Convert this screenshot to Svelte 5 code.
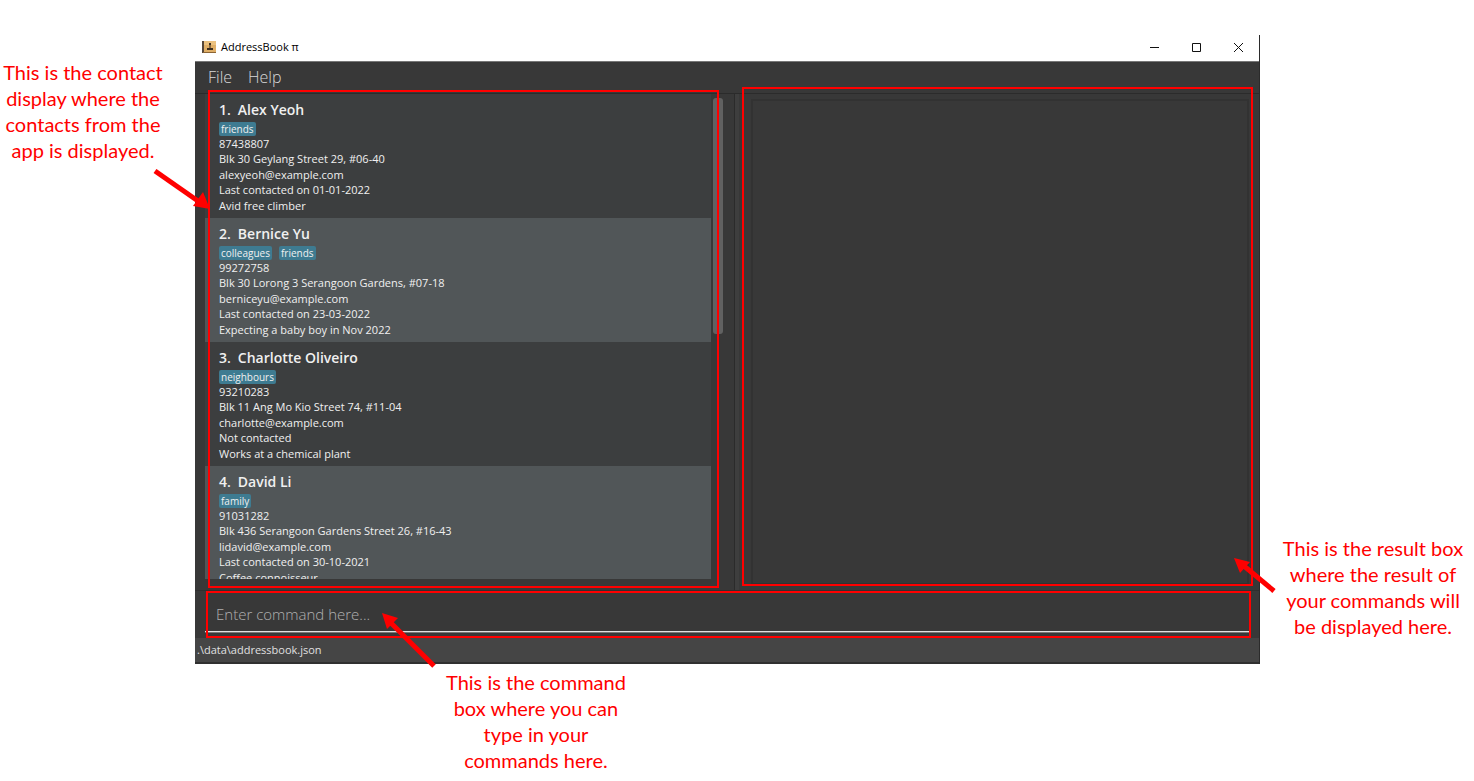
<script>
  const contacts = [
    { name: 'Alex Yeoh', tags: ['friends'], lines: ['87438807', 'Blk 30 Geylang Street 29, #06-40', 'alexyeoh@example.com', 'Last contacted on 01-01-2022', 'Avid free climber'] },
    { name: 'Bernice Yu', tags: ['colleagues', 'friends'], lines: ['99272758', 'Blk 30 Lorong 3 Serangoon Gardens, #07-18', 'berniceyu@example.com', 'Last contacted on 23-03-2022', 'Expecting a baby boy in Nov 2022'] },
    { name: 'Charlotte Oliveiro', tags: ['neighbours'], lines: ['93210283', 'Blk 11 Ang Mo Kio Street 74, #11-04', 'charlotte@example.com', 'Not contacted', 'Works at a chemical plant'] },
    { name: 'David Li', tags: ['family'], lines: ['91031282', 'Blk 436 Serangoon Gardens Street 26, #16-43', 'lidavid@example.com', 'Last contacted on 30-10-2021', 'Coffee connoisseur'] }
  ];
  let command = $state('');
</script>

<main class="page">
  <p class="note note-left">This is the contact<br />display where the<br />contacts from the<br />app is displayed.</p>

  <div class="window">
    <header class="titlebar">
      <svg class="app-icon" width="14" height="14" viewBox="0 0 14 14" aria-hidden="true">
        <path d="M2 1h12v12H2z" fill="#dfae66" />
        <path d="M2 1h12v4H2z" fill="#ebc17f" />
        <path d="M0 1h2v12H0z" fill="#55473a" />
        <path d="M1 12h13v1H1z" fill="#8c6534" />
        <path d="M7 3h2v2H7zM7.5 5h1v3h-1zM5 8h6v2H5z" fill="#3a2c1e" />
      </svg>
      <h1>AddressBook π</h1>
      <div class="controls">
        <button aria-label="Minimize"><svg width="11" height="11" viewBox="0 0 11 11"><path d="M1 5.5h9" /></svg></button>
        <button aria-label="Maximize"><svg width="11" height="11" viewBox="0 0 11 11"><path d="M1.5 1.5h8v8h-8z" /></svg></button>
        <button aria-label="Close"><svg width="11" height="11" viewBox="0 0 11 11"><path d="M1 1l9 9M10 1l-9 9" /></svg></button>
      </div>
    </header>

    <nav class="menu">
      <button>File</button>
      <button>Help</button>
    </nav>

    <div class="split">
      <section class="contacts">
        <ol class="list">
          {#each contacts as contact, i}
            <li>
              <h2><span>{i + 1}.</span>{contact.name}</h2>
              <div class="tags">
                {#each contact.tags as tag}<span>{tag}</span>{/each}
              </div>
              <div class="details">
                {#each contact.lines as line}<div>{line}</div>{/each}
              </div>
            </li>
          {/each}
        </ol>
        <div class="track"><div class="thumb"></div></div>
        <div class="frame frame-contacts"></div>
      </section>
      <div class="divider"></div>
      <section class="result">
        <div class="result-box"></div>
        <div class="frame frame-result"></div>
      </section>
    </div>

    <div class="command">
      <input type="text" aria-label="Command" placeholder="Enter command here..." bind:value={command} />
      <div class="frame frame-command"></div>
    </div>

    <footer>.\data\addressbook.json</footer>

    <svg class="arrow arrow-contacts" width="58" height="42" viewBox="0 0 58 42" aria-hidden="true">
      <path class="shaft" d="M2 2L45 32" /><path class="head" d="M57 40L40 37L50 23z" />
    </svg>
    <svg class="arrow arrow-command" width="56" height="56" viewBox="0 0 56 56" aria-hidden="true">
      <path class="shaft" d="M53 54L10 11" /><path class="head" d="M1 1L17 6L6 17z" />
    </svg>
    <svg class="arrow arrow-result" width="44" height="36" viewBox="0 0 44 36" aria-hidden="true">
      <path class="shaft" d="M41 34L11 9" /><path class="head" d="M1 1L17 5L7 16z" />
    </svg>
  </div>

  <p class="note note-right">This is the result box<br />where the result of<br />your commands will<br />be displayed here.</p>
  <p class="note note-bottom">This is the command<br />box where you can<br />type in your<br />commands here.</p>
</main>

<style>
  :global(body) { margin: 0; background: #fff; }
  .page {
    display: grid;
    grid-template-columns: 195px minmax(0, 1fr) 214px;
    grid-template-rows: 35px minmax(0, 1fr) 117px;
    height: 100vh;
    overflow: hidden;
    font-family: "Open Sans", "Noto Sans", sans-serif;
  }
  .note {
    margin: 0;
    color: #f00;
    font: 20px/26px Lato, sans-serif;
    text-align: center;
    white-space: nowrap;
  }
  .note-left { grid-column: 1; grid-row: 2; padding: 24px 29px 0 0; }
  .note-right { grid-column: 3; grid-row: 2; align-self: end; padding: 0 0 25px 12px; }
  .note-bottom { grid-column: 2; grid-row: 3; justify-self: start; padding: 5px 0 0 251px; }

  .window {
    position: relative;
    grid-column: 2;
    grid-row: 2;
    display: flex;
    flex-direction: column;
    min-height: 0;
    background: #383838;
    border-right: 1px solid #2b2b2b;
    box-sizing: border-box;
  }
  button { padding: 0; border: 0; background: none; font: inherit; color: inherit; }
  .titlebar {
    display: flex;
    align-items: center;
    height: 26px;
    box-sizing: border-box;
    padding: 0 0 2px 7px;
    background: #fff;
  }
  .app-icon { margin-right: 5px; }
  h1 { flex: 1; margin: 0; font-size: 11px; font-weight: 400; line-height: 16px; color: #000; }
  .controls { display: flex; }
  .controls button { width: 42px; height: 24px; display: grid; place-items: center; }
  .controls path { fill: none; stroke: #111; stroke-width: 1; }
  .menu {
    display: flex;
    gap: 16px;
    height: 31px;
    padding-left: 13px;
    border-top: 1px solid #777;
    border-bottom: 1px solid #2b2b2b;
    color: #d8d8d8;
    font-size: 16px;
    font-weight: 300;
  }
  .menu button { padding-bottom: 2px; }
  .split { flex: 1; display: flex; min-height: 0; }
  .contacts, .result { position: relative; display: flex; box-sizing: border-box; min-width: 0; }
  .contacts { flex: 540 1 0; padding: 0 11px 11px 10px; border-right: 1px solid #2b2b2b; }
  .divider { width: 4px; background: #3e3e3e; }
  .result { flex: 520 1 0; padding: 5px 10px 5px 12px; }
  .result-box { flex: 1; border: 2px solid #323232; }
  .list { flex: 1; margin: 0; padding: 0; overflow: hidden; list-style: none; }
  li { height: 124px; box-sizing: border-box; padding: 6px 14px 5px; background: #3c3e3f; color: #f0f0f0; }
  li:nth-child(even) { background: #515658; }
  h2 { display: flex; gap: 7px; margin: 0 0 2px; font-size: 14px; font-weight: 600; line-height: 20px; }
  .tags { display: flex; gap: 7px; height: 14px; }
  .tags span { padding: 0 2px; border-radius: 2px; background: #3e7b91; font-size: 10px; line-height: 14px; }
  .details { display: grid; grid-auto-rows: 1fr; height: 77px; font-size: 11px; line-height: 15px; white-space: nowrap; }
  .track { width: 12px; padding: 4px 0 0 2px; box-sizing: border-box; }
  .thumb { width: 10px; height: 49%; border-radius: 3px; background: #616161; }
  .command {
    position: relative;
    height: 47px;
    padding: 0 10px;
    border-top: 1px solid #2f2f2f;
  }
  input {
    display: block;
    width: 100%;
    height: 41px;
    box-sizing: border-box;
    padding: 5px 11px 0;
    border: 0;
    border-bottom: 1px solid #e0e0e0;
    box-shadow: 0 1px #777;
    outline: 0;
    background: transparent;
    color: #fff;
    font: 300 15px/24px "Open Sans", sans-serif;
  }
  input::placeholder { color: #b0b0b0; opacity: 1; }
  footer {
    height: 24px;
    padding-left: 2px;
    background: #454545;
    border-bottom: 2px solid #303030;
    color: #e0e0e0;
    font-size: 11px;
    line-height: 24px;
  }
  .frame { position: absolute; border: 2px solid #f00; pointer-events: none; }
  .frame-contacts { inset: -4px 15px 2px 13px; }
  .frame-result { inset: -7px 6px 4px 3px; }
  .frame-command { inset: 0 8px 0 11px; }
  .arrow { position: absolute; pointer-events: none; }
  .arrow-contacts { top: 134px; left: -42px; }
  .arrow-command { bottom: -4px; left: 186px; }
  .arrow-result { right: -18px; bottom: 71px; }
  .shaft { fill: none; stroke: #f00; stroke-width: 5; }
  .head { fill: #f00; }
</style>
